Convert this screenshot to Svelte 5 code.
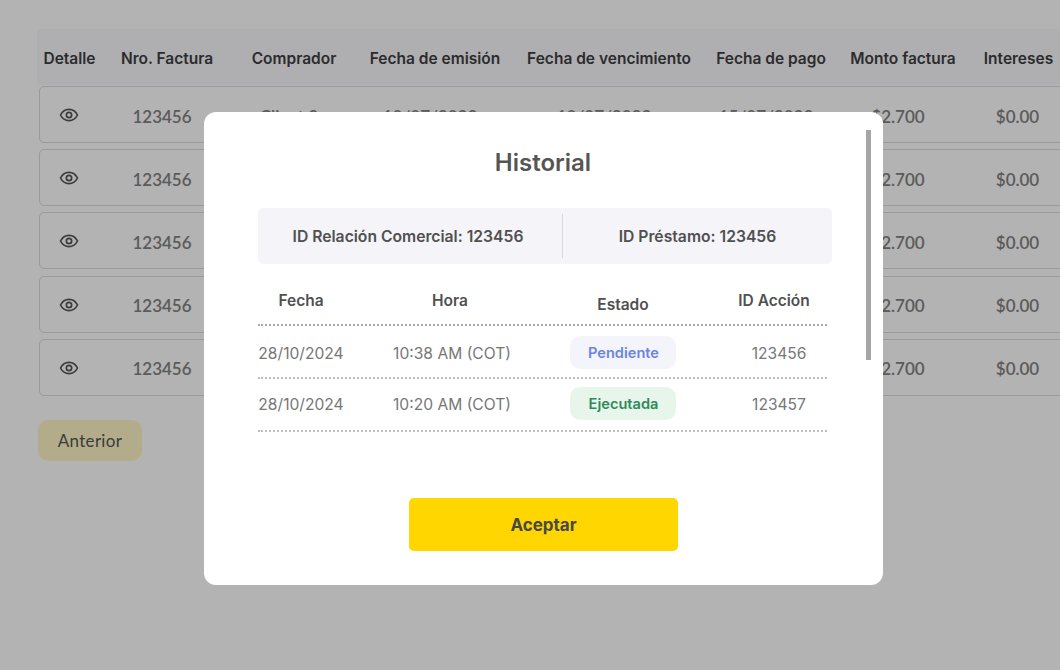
<script>
    const columns = ['Detalle', 'Nro. Factura', 'Comprador', 'Fecha de emisión', 'Fecha de vencimiento', 'Fecha de pago', 'Monto factura', 'Intereses'];
    // only the first row peeks out above the modal, the rest of those cells stay covered
    const invoices = [
        { number: '123456', buyer: 'Client 3', issued: '10/07/2023', due: '10/07/2023', paid: '15/07/2023', amount: '$2.700', interest: '$0.00' },
        { number: '123456', amount: '$2.700', interest: '$0.00' },
        { number: '123456', amount: '$2.700', interest: '$0.00' },
        { number: '123456', amount: '$2.700', interest: '$0.00' },
        { number: '123456', amount: '$2.700', interest: '$0.00' }
    ];
    const history = [
        { date: '28/10/2024', time: '10:38 AM (COT)', status: 'Pendiente', tone: 'pending', id: '123456' },
        { date: '28/10/2024', time: '10:20 AM (COT)', status: 'Ejecutada', tone: 'done', id: '123457' }
    ];
</script>

<div class="page">
    <div class="table">
        <div class="table-head">
            {#each columns as column}
                <div>{column}</div>
            {/each}
        </div>
        {#each invoices as invoice}
            <div class="table-row">
                <div class="eye">
                    <svg width="20" height="20" viewBox="0 0 24 24" fill="none" stroke="currentColor" stroke-width="2">
                        <path d="M1.8 12C4 7.6 7.6 5.3 12 5.3s8 2.3 10.2 6.7c-2.2 4.4-5.8 6.7-10.2 6.7S4 16.4 1.8 12z" />
                        <circle cx="12" cy="12" r="3.2" />
                    </svg>
                </div>
                <div class="cell">{invoice.number}</div>
                <div class="cell covered">{invoice.buyer ?? ''}</div>
                <div class="cell covered">{invoice.issued ?? ''}</div>
                <div class="cell covered">{invoice.due ?? ''}</div>
                <div class="cell covered">{invoice.paid ?? ''}</div>
                <div class="cell">{invoice.amount}</div>
                <div class="cell">{invoice.interest}</div>
            </div>
        {/each}
    </div>
    <button class="prev">Anterior</button>

    <div class="backdrop"></div>

    <div class="modal">
        <div class="scrollbar"></div>
        <h2>Historial</h2>
        <div class="info">
            <div class="info-left">ID Relación Comercial: 123456</div>
            <span class="divider"></span>
            <div>ID Préstamo: 123456</div>
        </div>
        <div class="history-head">
            <div>Fecha</div>
            <div class="time-head">Hora</div>
            <div class="state-head">Estado</div>
            <div class="id-head">ID Acción</div>
        </div>
        {#each history as item}
            <div class="history-row">
                <div class="text-cell date-cell">{item.date}</div>
                <div class="text-cell">{item.time}</div>
                <div class="pill {item.tone}">{item.status}</div>
                <div class="text-cell id-cell">{item.id}</div>
            </div>
        {/each}
        <button class="accept">Aceptar</button>
    </div>
</div>

<style>
    :global(body) {
        margin: 0;
        background: #fff;
    }

    .page {
        position: relative;
        width: 1060px;
        height: 670px;
        overflow: hidden;
        padding: 29px 0 0 37px;
        box-sizing: border-box;
    }

    .table {
        width: 1040px;
    }

    .table-head {
        display: grid;
        grid-template-columns: 65px 130px 124px 158px 190px 134px 130px 101px;
        align-items: center;
        height: 56px;
        padding-top: 2px;
        box-sizing: border-box;
        background: #f9f9fc;
        border-radius: 4px 0 0 4px;
        font: 600 15.5px "Inter", sans-serif;
        color: #3e3e42;
        text-align: center;
        white-space: nowrap;
    }

    .table-row {
        display: grid;
        grid-template-columns: 57px 130px 124px 158px 190px 134px 130px 109px;
        align-items: center;
        box-sizing: border-box;
        height: 57px;
        margin: 0 0 6.2px 2px;
        padding-top: 1px;
        border: 1.5px solid #dcdcdc;
        border-radius: 5px;
        font: 600 17px "Lato", sans-serif;
        color: #828282;
        text-align: center;
    }

    .table-head + .table-row {
        margin-top: 1px;
    }

    .cell {
        padding-top: 2px;
    }

    .covered {
        padding-top: 3px;
    }

    .eye {
        display: flex;
        justify-content: center;
        color: #555;
    }

    .prev {
        display: block;
        width: 104px;
        height: 41px;
        margin: 24px 0 0 1px;
        border: none;
        border-radius: 10px;
        background: #fff6c6;
        font: 400 17px "Lato", sans-serif;
        letter-spacing: 0.3px;
        color: #555;
    }

    .backdrop {
        position: absolute;
        inset: 0;
        background: rgba(0, 0, 0, 0.298);
    }

    .modal {
        position: absolute;
        left: 204px;
        top: 112px;
        width: 679px;
        height: 473px;
        box-sizing: border-box;
        padding: 35px 51px 0 54px;
        background: #fff;
        border-radius: 12px;
        font-family: "Inter", sans-serif;
    }

    .scrollbar {
        position: absolute;
        left: 662px;
        top: 18px;
        width: 5px;
        height: 230px;
        background: #a6a6a6;
    }

    h2 {
        margin: 0 0 30px;
        height: 31px;
        padding-right: 4px;
        font: 600 24px/31px "Inter", sans-serif;
        color: #555;
        text-align: center;
    }

    .info {
        display: grid;
        grid-template-columns: 304px 1px 1fr;
        align-items: center;
        width: 574px;
        height: 56px;
        margin-bottom: 16px;
        background: #f4f4f9;
        border-radius: 5px;
        font-size: 15.7px;
        font-weight: 600;
        color: #505050;
        text-align: center;
    }

    .info-left {
        padding-right: 4px;
    }

    .divider {
        height: 44px;
        background: #dadada;
    }

    .history-head,
    .history-row {
        display: grid;
        grid-template-columns: 86px 214px 130px 139px;
        align-items: center;
        box-sizing: border-box;
        width: 569px;
        text-align: center;
    }

    .history-head {
        height: 46px;
        padding-bottom: 4px;
        font-size: 15.5px;
        font-weight: 600;
        color: #505050;
        border-bottom: 2px dotted #a9a9a9;
    }

    .time-head {
        padding-right: 2px;
    }

    .state-head {
        padding-top: 8px;
    }

    .id-head {
        padding-left: 33px;
    }

    .history-row {
        height: 53px;
        font-size: 15.6px;
        color: #777;
        border-bottom: 2px dotted #bdbdbd;
    }

    .history-head + .history-row {
        padding-top: 2px;
    }

    .history-row + .history-row {
        padding-bottom: 2px;
    }

    .text-cell {
        padding: 2px 0 0 2px;
    }

    .date-cell {
        padding-left: 0;
        white-space: nowrap;
    }

    .pill {
        justify-self: center;
        width: 106px;
        height: 33px;
        padding-left: 1px;
        box-sizing: border-box;
        border-radius: 10px;
        font-size: 14.6px;
        font-weight: 600;
        line-height: 35px;
    }

    .pending {
        background: #f4f4fb;
        color: #6b84dc;
    }

    .done {
        background: #e8f5eb;
        color: #2f8a5b;
    }

    .id-cell {
        padding-left: 43px;
    }

    .accept {
        display: block;
        width: 269px;
        height: 53px;
        margin: 66px 0 0 151px;
        border: none;
        border-radius: 5px;
        background: #ffd600;
        font: 700 17px "Inter", sans-serif;
        color: #484848;
    }
</style>
